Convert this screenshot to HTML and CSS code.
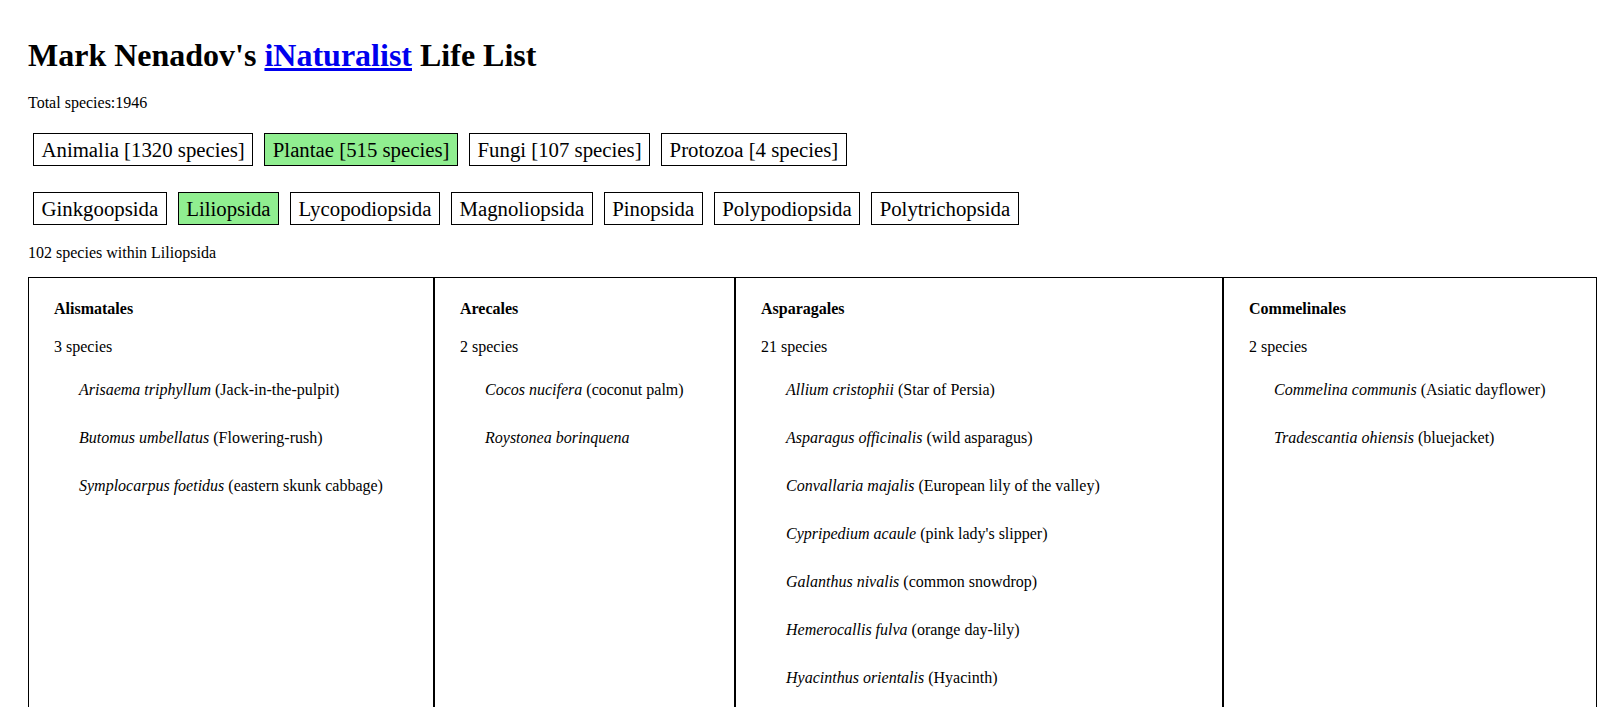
FILE: index.html
```html
<!DOCTYPE html>
<html lang="en">
<head>
<meta charset="utf-8">
<title>Mark Nenadov's iNaturalist Life List</title>
<link rel="stylesheet" href="styles.css">
</head>
<body>
<div class="page">
  <h1 class="title">Mark Nenadov's <a class="title-link" href="#">iNaturalist</a> Life List</h1>
  <p class="total">Total species:1946</p>

  <div class="filters filters-kingdom">
    <span class="filter">Animalia [1320 species]</span>
    <span class="filter filter-active">Plantae [515 species]</span>
    <span class="filter">Fungi [107 species]</span>
    <span class="filter">Protozoa [4 species]</span>
  </div>

  <div class="filters filters-class">
    <span class="filter">Ginkgoopsida</span>
    <span class="filter filter-active">Liliopsida</span>
    <span class="filter">Lycopodiopsida</span>
    <span class="filter">Magnoliopsida</span>
    <span class="filter">Pinopsida</span>
    <span class="filter">Polypodiopsida</span>
    <span class="filter">Polytrichopsida</span>
  </div>

  <p class="within">102 species within Liliopsida</p>

  <div class="orders">
    <div class="order">
      <div class="order-name">Alismatales</div>
      <div class="order-count">3 species</div>
      <ul class="species-list">
        <li class="species"><i>Arisaema triphyllum</i> (Jack-in-the-pulpit)</li>
        <li class="species"><i>Butomus umbellatus</i> (Flowering-rush)</li>
        <li class="species"><i>Symplocarpus foetidus</i> (eastern skunk cabbage)</li>
      </ul>
    </div>
    <div class="order">
      <div class="order-name">Arecales</div>
      <div class="order-count">2 species</div>
      <ul class="species-list">
        <li class="species"><i>Cocos nucifera</i> (coconut palm)</li>
        <li class="species"><i>Roystonea borinquena</i></li>
      </ul>
    </div>
    <div class="order">
      <div class="order-name">Asparagales</div>
      <div class="order-count">21 species</div>
      <ul class="species-list">
        <li class="species"><i>Allium cristophii</i> (Star of Persia)</li>
        <li class="species"><i>Asparagus officinalis</i> (wild asparagus)</li>
        <li class="species"><i>Convallaria majalis</i> (European lily of the valley)</li>
        <li class="species"><i>Cypripedium acaule</i> (pink lady's slipper)</li>
        <li class="species"><i>Galanthus nivalis</i> (common snowdrop)</li>
        <li class="species"><i>Hemerocallis fulva</i> (orange day-lily)</li>
        <li class="species"><i>Hyacinthus orientalis</i> (Hyacinth)</li>
      </ul>
    </div>
    <div class="order">
      <div class="order-name">Commelinales</div>
      <div class="order-count">2 species</div>
      <ul class="species-list">
        <li class="species"><i>Commelina communis</i> (Asiatic dayflower)</li>
        <li class="species"><i>Tradescantia ohiensis</i> (bluejacket)</li>
      </ul>
    </div>
  </div>
</div>
</body>
</html>
```

FILE: styles.css
```css
html, body {
  margin: 0;
  padding: 0;
  background: #ffffff;
}

body {
  font-family: "Liberation Serif", "Times New Roman", serif;
  font-size: 16px;
  color: #000000;
}

.page {
  padding: 37px 1px 0 28px;
}

.title {
  margin: 0;
  font-size: 32px;
  line-height: 36px;
  font-weight: bold;
}

.title-link {
  color: #0000ee;
  text-decoration: underline;
}

.total {
  margin: 21px 0 0 0;
  line-height: 18px;
}

.filters {
  display: flex;
  flex-wrap: wrap;
  gap: 11px;
  padding-left: 5px;
}

.filters-kingdom {
  margin-top: 21px;
}

.filters-class {
  margin-top: 26px;
}

.filter {
  display: inline-block;
  border: 1px solid #000000;
  padding: 3.5px 7.5px;
  font-size: 20.8px;
  line-height: 24px;
  background: #ffffff;
  white-space: nowrap;
}

.filter-active {
  background: #90ee90;
}

.within {
  margin: 19px 0 0 0;
  line-height: 18px;
}

.orders {
  display: grid;
  grid-template-columns: 406px 301px 488px 374px;
  margin-top: 15px;
}

.order {
  border: 1px solid #000000;
  padding: 21.5px 0 0 25px;
  min-height: 1100px;
  line-height: 18px;
}

.order-name {
  font-weight: bold;
}

.order-count {
  margin-top: 20.5px;
}

.species-list {
  list-style: none;
  margin: 25px 0 0 25px;
  padding: 0;
  display: flex;
  flex-direction: column;
  gap: 30px;
}

.species i {
  font-style: italic;
}
```
